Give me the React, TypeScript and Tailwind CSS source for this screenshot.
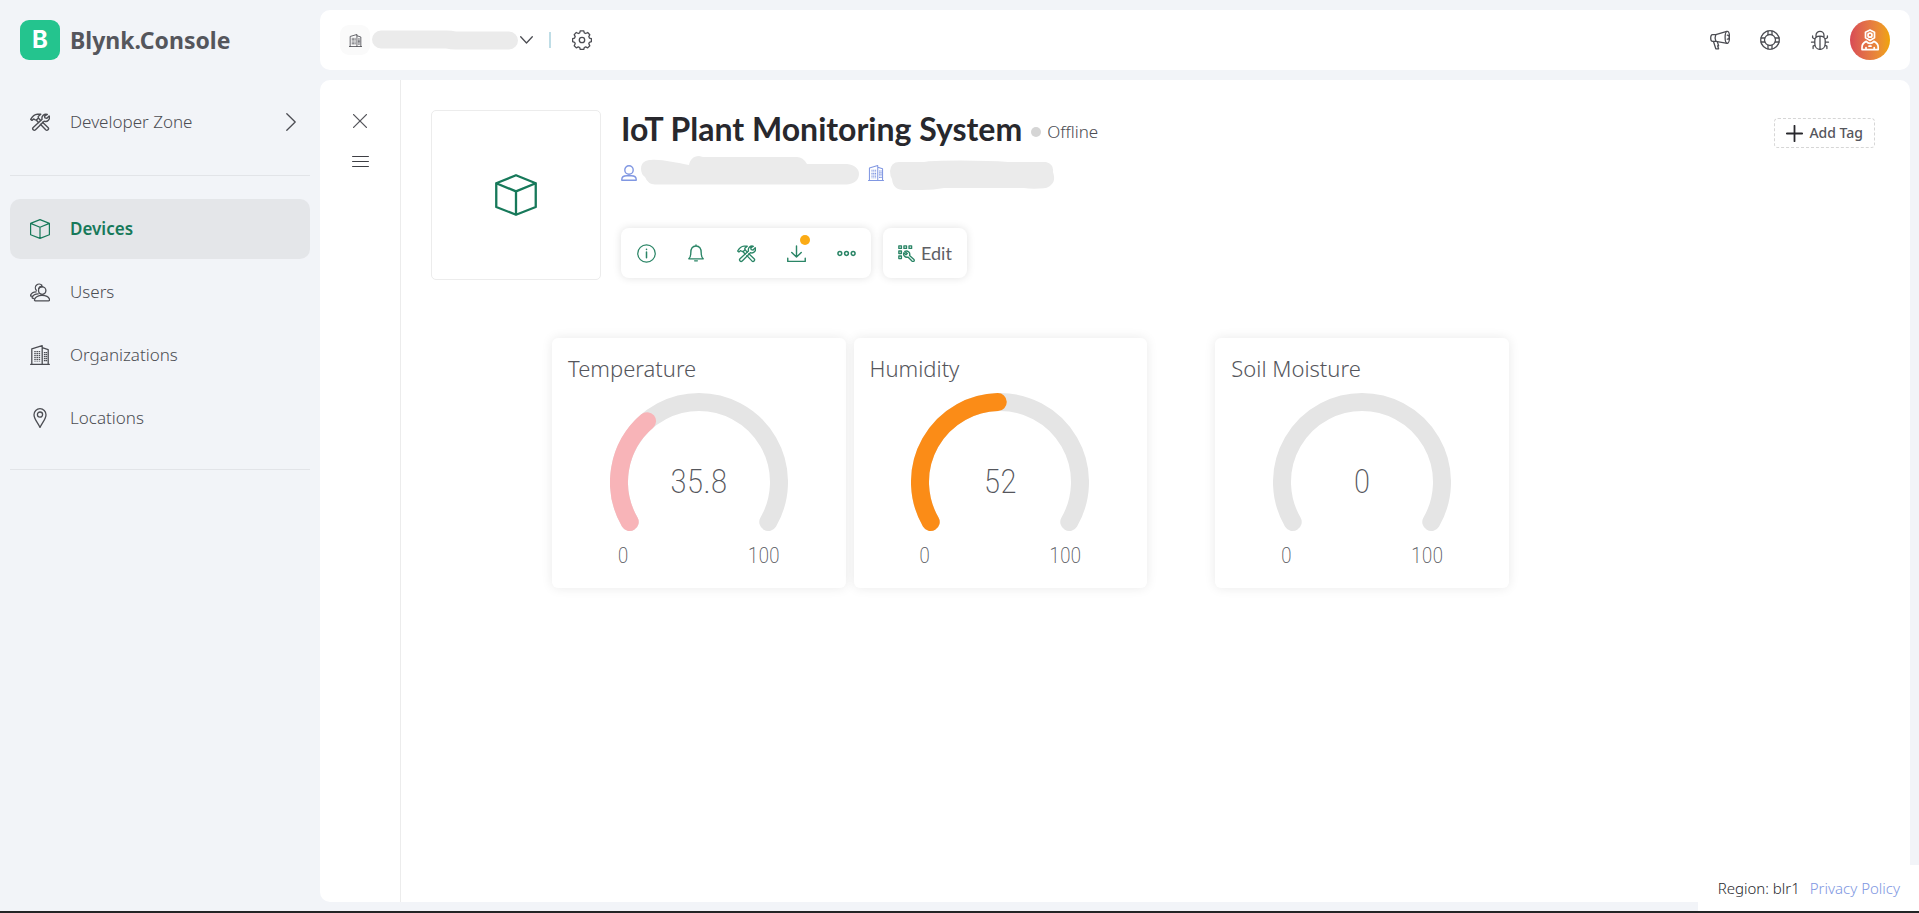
import type { ReactNode } from "react";

type IconProps = { className?: string; children: ReactNode; box?: string; stroke?: number };

function Icon({ className = "size-5", children, box = "0 0 20 20", stroke = 1.3 }: IconProps) {
  return (
    <svg
      className={"shrink-0 " + className}
      viewBox={box}
      fill="none"
      stroke="currentColor"
      strokeWidth={stroke}
      strokeLinecap="round"
      strokeLinejoin="round"
      aria-hidden="true"
    >
      {children}
    </svg>
  );
}

function CubeIcon({ className, stroke }: { className?: string; stroke?: number }) {
  return (
    <Icon className={className} stroke={stroke}>
      <path d="M10 .6 19.4 4.4V15.7L10 19.4.6 15.7V4.4ZM.6 4.4 10 8.3 19.4 4.4M10 8.3V19.4" />
    </Icon>
  );
}

function ToolsIcon({ className }: { className?: string }) {
  return (
    <Icon className={className} stroke={1.4}>
      <path d="M.7 7.4C2.2 4.600 4.600 2.300 7.400 2.200L10.800 2.300 8.200 4.500 8.400 6.100 6.400 8.100 4.800 7.600 3.600 7 2 8.400Z" />
      <path d="M8.600 6.200 10.700 8.400M6.400 8.200 8.500 10.500M12.500 10.300 18 15.500A1.600 1.600 0 0 1 15.700 17.800L10.400 12.200" />
      <path d="M17.300 2.400A4 4 0 0 0 12.100 7.300L3.200 15.500A1.600 1.600 0 0 0 5.500 17.800L14.100 9.200A4 4 0 0 0 19.200 3.900L16.900 6.300 14.900 5.900 14.500 4.100Z" />
    </Icon>
  );
}

function UsersIcon() {
  return (
    <Icon>
      <circle cx="12.2" cy="8.6" r="3.7" />
      <path d="M5.3 18.8a1 1 0 0 1-.8-1.3c1-2.5 3.6-4.1 7.500-4.100s6.800 1.500 7.500 4c.2.8-.1 1.400-.9 1.400Z" />
      <path d="M8.600 6.600A3.300 3.300 0 0 1 12.500 4.700M6.300 8.200A3.700 3.700 0 1 1 11.900 3.300" />
      <path d="M4 16.400H3C2.200 16.400 2 15.800 2.200 15.200 3 13.200 5.100 11.900 8.300 11.800M2 14.200H1.400C.6 14.200.4 13.600.6 13 1.400 11 3.400 10 6.200 9.800" />
    </Icon>
  );
}

function BuildingIcon({ className }: { className?: string }) {
  return (
    <Icon className={className}>
      <path d="M.6 19.300H19.400M1.800 19.300V3.800L12.200.7V19.300M12.200 2.700 18.200 4.600V19.300" />
      <path
        d="M5 6V16.500M7.200 6V16.500M9.400 6V16.500M14.600 7V16.500M16.400 7V16.500"
        strokeWidth="1.5"
        strokeDasharray="1.2 .8"
        strokeLinecap="butt"
      />
    </Icon>
  );
}

function PinIcon() {
  return (
    <Icon>
      <path d="M10 19.400C8 15 4 11 4 6.700A6 6 0 0 1 16 6.700C16 11 12 15 10 19.400Z" />
      <circle cx="10" cy="6.600" r="2.600" />
    </Icon>
  );
}

function GearIcon() {
  return (
    <Icon>
      <path d="M8.300.8h3.400l.6 2.100 1.400.6 2-1 2.100 2.200-1 1.900.6 1.500 2 .6v3l-2 .6-.6 1.500 1 2-2.100 2.100-2-1-1.400.6-.6 2H8.300l-.6-2-1.400-.6-2 1-2.100-2.200 1-1.900-.6-1.500-2-.6v-3l2-.6.6-1.500-1-2 2.100-2.100 2 1 1.400-.6Z" />
      <circle cx="10" cy="10" r="2.700" />
    </Icon>
  );
}

function MegaphoneIcon() {
  return (
    <Icon>
      <path d="M16.800 1.300 5.800 4.600H2.500C1.300 4.600.7 6.200.7 8S1.400 11.400 2.500 11.400H5.900L17.200 13.300" />
      <ellipse cx="17.300" cy="7.300" rx="2.200" ry="6" />
      <path d="M5.800 4.600C5 6.500 5 9.500 5.900 11.400M17.300 5.200A2 2 0 0 1 17.300 9.200M3.500 11.500 5.800 18.800H8.600L7.600 15.800H8.600L7.300 11.600" />
    </Icon>
  );
}

function LifebuoyIcon() {
  return (
    <Icon>
      <circle cx="10" cy="10" r="9.300" />
      <circle cx="10" cy="10" r="5.500" />
      <path d="M8 .9V4.800M12 .9V4.800M8 15.200V19.100M12 15.200V19.100M.9 8H4.800M.9 12H4.800M15.200 8H19.100M15.200 12H19.100" />
    </Icon>
  );
}

function BugIcon() {
  return (
    <Icon>
      <path d="M6 6.600V5.400A4 4 0 0 1 14 5.400V6.600M4.800 10.500C4.800 7.500 7 6.200 10 6.200S15.200 7.500 15.200 10.500V13.500C15.200 16.800 13.200 19.400 10 19.400S4.800 16.800 4.800 13.500ZM10 6.200V19.400M4.800 9 2.600 7.800V6M15.200 9 17.400 7.800V6M4.800 12.200H1.500M15.200 12.200H18.500M5.200 15.200 3.100 16.200V18.600M14.800 15.200 16.900 16.200V18.600" />
    </Icon>
  );
}

const NAV = [
  { label: "Users", icon: <UsersIcon /> },
  { label: "Organizations", icon: <BuildingIcon /> },
  { label: "Locations", icon: <PinIcon /> },
];

function Sidebar() {
  return (
    <aside className="w-80 shrink-0 px-2.5 pt-5 text-[#4c4d53]">
      <a href="#home" className="flex h-10 items-center gap-2.5 pl-2.5">
        <span className="flex size-10 items-center justify-center rounded-[9px] bg-[#24c48e] font-['Inter'] text-2xl font-bold text-white">
          B
        </span>
        <span className="text-[23px] font-bold text-[#55565c]">Blynk.Console</span>
      </a>
      <nav className="text-[17px] font-[350]">
        <a href="#developer" className="mt-8 flex h-15 items-center gap-5 pr-[14px] pl-5">
          <ToolsIcon />
          <span className="flex-1">Developer Zone</span>
          <Icon className="h-[18px] w-[10px]" box="0 0 10 18">
            <path d="M.8.8 9.200 9 .8 17.200" />
          </Icon>
        </a>
        <div className="mt-[23px] border-t border-[#e2e4e8]" />
        <ul className="mt-[23px] flex flex-col gap-[3px]">
          <li>
            <a
              href="#devices"
              aria-current="page"
              className="flex h-15 items-center gap-5 rounded-[10px] bg-[#e4e6e9] pl-5 font-semibold text-[#17795a]"
            >
              <CubeIcon stroke={1.2} />
              Devices
            </a>
          </li>
          {NAV.map((n) => (
            <li key={n.label}>
              <a href={"#" + n.label.toLowerCase()} className="flex h-15 items-center gap-5 pl-5">
                {n.icon}
                {n.label}
              </a>
            </li>
          ))}
        </ul>
        <div className="mt-[21px] border-t border-[#e2e4e8]" />
      </nav>
    </aside>
  );
}

function TopBar() {
  return (
    <header className="flex h-15 shrink-0 items-center rounded-[10px] bg-white px-5 text-[#4c4d53]">
      <button type="button" aria-label="Switch organization" className="flex items-center">
        <span className="flex size-[30px] items-center justify-center rounded-[9px] bg-[#fafafa]">
          <BuildingIcon className="size-[13px]" />
        </span>
        <svg className="ml-0.5 h-5 w-[146px]" viewBox="0 0 146 20" fill="#ebebeb" aria-hidden="true">
          <path d="M9 .5H74Q80 .5 84 1.500H137A9 9 0 0 1 137 19.500H84Q78 19.500 74 18.500H9A9 9 0 0 1 9 .5Z" />
        </svg>
        <Icon className="ml-0.5 h-2 w-[13px]" box="0 0 13 8">
          <path d="M.7.8 6.500 7 12.300.8" />
        </Icon>
      </button>
      <span className="ml-4 h-4 w-0.5 bg-[#bfdde6]" />
      <button type="button" aria-label="Settings" className="ml-[21px]">
        <GearIcon />
      </button>
      <div className="ml-auto flex items-center gap-5">
        <div className="flex items-center gap-[30px]">
          <button type="button" aria-label="Announcements">
            <MegaphoneIcon />
          </button>
          <button type="button" aria-label="Help">
            <LifebuoyIcon />
          </button>
          <button type="button" aria-label="Report a bug">
            <BugIcon />
          </button>
        </div>
        <button
          type="button"
          aria-label="Account"
          className="flex size-10 items-center justify-center rounded-full bg-linear-to-r from-[#d84a55] to-[#f0a400] text-white"
        >
          <Icon className="size-[22px]" box="0 0 22 22" stroke={1.7}>
            <path d="M11 1 15.500 3.200V8.800L11 11.500 6.500 8.800V3.200Z" />
            <circle cx="11" cy="6.200" r="2" />
            <path d="M7.200 12.400C4.500 13.600 3 15.600 3 18.400V20.600H19.200V18.400C19.200 15.600 17.600 13.600 14.900 12.400M7.200 12.400C9.400 15 12.700 15 14.900 12.400M7 20.500V18.500M15.200 20.500V18.500M10 17.200H12" />
          </Icon>
        </button>
      </div>
    </header>
  );
}

function Toolbar() {
  const button = "flex size-[50px] items-center justify-center";
  return (
    <div className="flex gap-3 text-[#2a8566]">
      <div className="flex rounded-lg bg-white shadow-[0_0_8px_rgba(0,0,0,0.12)]">
        <button type="button" aria-label="Device info" className={button}>
          <Icon className="size-[19px]">
            <circle cx="10" cy="10" r="9.200" />
            <path d="M10 8.500V14.500M10 5.500V5.900" strokeWidth="1.6" />
          </Icon>
        </button>
        <button type="button" aria-label="Notifications" className={button}>
          <Icon className="size-[18px]" stroke={1.5}>
            <path d="M10 1V2.200M2 16.500C3.700 15 4.200 13 4.200 10 4.200 5 6.600 2.200 10 2.200S15.800 5 15.800 10C15.800 13 16.300 15 18 16.500ZM8.500 18.700H11.500" />
          </Icon>
        </button>
        <button type="button" aria-label="Developer tools" className={button}>
          <ToolsIcon className="size-[19px]" />
        </button>
        <button type="button" aria-label="Firmware updates" className={button + " relative"}>
          <Icon className="size-[19px]" stroke={1.5}>
            <path d="M10 2V13.500M5 9 10 13.800 15 9M.8 15V18.300H19.200V15" />
          </Icon>
          <span className="absolute top-[7px] right-[11px] size-2.5 rounded-full bg-[#fbab15]" />
        </button>
        <button type="button" aria-label="More actions" className={button}>
          <Icon className="size-[19px]" stroke={1.6}>
            <circle cx="3" cy="10" r="2" />
            <circle cx="10" cy="10" r="2" />
            <circle cx="17" cy="10" r="2" />
          </Icon>
        </button>
      </div>
      <button
        type="button"
        className="flex items-center gap-1.5 rounded-lg bg-white px-[15px] shadow-[0_0_8px_rgba(0,0,0,0.12)]"
      >
        <Icon className="size-[17px]" stroke={1.6}>
          <path d="M1 1h3v3H1ZM7 1h3v3H7ZM13 1h3v3H13ZM1 7h3v3H1ZM1 13h3v3H1Z" />
          <path d="M8 7.600A3.900 3.900 0 0 1 13.600 12.300L18.800 17.100A1.500 1.500 0 0 1 16.700 19.200L11.700 14.200A3.800 3.800 0 0 1 6.900 9.200L9.400 11.400 10.900 9.900Z" />
        </Icon>
        <span className="font-['Lato',sans-serif] text-lg leading-6 text-[#5f6065]">Edit</span>
      </button>
    </div>
  );
}

function DeviceHeader() {
  return (
    <div className="flex items-start gap-5">
      <div className="flex size-[170px] shrink-0 items-center justify-center rounded-[5px] border border-[#ececec] text-[#17795a]">
        <CubeIcon className="size-[42px]" stroke={1.1} />
      </div>
      <div className="flex h-[170px] flex-1 flex-col pb-0.5">
        <div className="flex h-[38px] items-center">
          <h1 className="font-['Lato',sans-serif] text-[32px] leading-[38px] font-bold text-[#28282d]">
            IoT Plant Monitoring System
          </h1>
          <span className="mt-1.5 ml-[9px] flex items-center gap-1.5 text-[17px] leading-6 font-[350] text-[#4c4d53]">
            <span className="size-2.5 rounded-full bg-[#d5d5d5]" />
            Offline
          </span>
        </div>
        <div className="mt-2 flex h-[34px] items-center text-[#8097e2]">
          <Icon className="size-4" box="0 0 16 16" stroke={1.400}>
            <circle cx="8" cy="5" r="4.200" />
            <path d="M.8 15.300V14.300C.8 12.300 2.800 10.700 5.800 10.700H10.200C13.200 10.700 15.200 12.300 15.200 14.300V15.300Z" />
          </Icon>
          <svg className="mr-2 ml-1 h-[30px] w-[219px] self-start" viewBox="0 0 219 30" fill="#ebebeb" aria-hidden="true">
            <path d="M0 13C0 6 5 4 10 4 20 3 36 7 48 9 49 4 52 0 58 0L62 1H156Q162 1 166 8H206C214 9 218 13 218 18S214 28 206 28.500H14Q7 28.500 4 21Q0 18 0 13Z" />
          </svg>
          <BuildingIcon className="size-4" />
          <svg className="ml-1.5 h-[30px] w-[165px] self-end" viewBox="0 0 165 30" fill="#ebebeb" aria-hidden="true">
            <path d="M0 11Q1 2 9 2H34Q40 .5 70 .5T118 2H156Q164 4 163 12Q166 21 161 25Q158 28.500 150 28.500 140 29 134 28H54Q44 30 32 30H14Q3 30 2 19Q0 16 0 11Z" />
          </svg>
        </div>
        <div className="mt-auto">
          <Toolbar />
        </div>
      </div>
      <button
        type="button"
        className="mt-2 flex h-[30px] items-center gap-1.5 rounded border border-dashed border-[#d6d6d6] px-[11px] text-sm font-medium text-[#55565c]"
      >
        <Icon className="size-[17px] text-[#28282d]" box="0 0 17 17" stroke={1.8}>
          <path d="M8.500.8V16.200M.8 8.500H16.200" />
        </Icon>
        Add Tag
      </button>
    </div>
  );
}

const RADIUS = 80;
const SWEEP = 240;
// Angle taken up by the round cap at the end of the filled arc.
const CAP = 6.4;

function arc(from: number, to: number) {
  const at = (deg: number) => {
    const r = (deg * Math.PI) / 180;
    return `${89 + RADIUS * Math.sin(r)} ${89 - RADIUS * Math.cos(r)}`;
  };
  return `M${at(from)}A${RADIUS} ${RADIUS} 0 ${to - from > 180 ? 1 : 0} 1 ${at(to)}`;
}

type GaugeProps = { title: string; value: number; color: string; className: string };

function Gauge({ title, value, color, className }: GaugeProps) {
  return (
    <section
      className={
        "flex h-[250px] flex-col items-center rounded-md bg-white px-4 pt-[15px] text-[#55565c] shadow-[0_0_12px_rgba(0,0,0,0.09)] " +
        className
      }
    >
      <h2 className="self-start text-[22px] leading-[30px] font-[350]">{title}</h2>
      <div className="mt-2.5 grid w-[178px] font-['Roboto_Condensed','Liberation_Sans_Narrow',Roboto,sans-serif] font-extralight">
        <svg
          className="col-start-1 row-start-1 h-[140px] w-[178px]"
          viewBox="0 0 178 140"
          fill="none"
          strokeWidth="18"
          strokeLinecap="round"
          role="img"
          aria-label={title}
        >
          <path d={arc(-120, 120)} stroke="#e5e5e5" />
          {value > 0 && <path d={arc(-120, -120 + (SWEEP * value) / 100 - CAP)} stroke={color} />}
        </svg>
        <output className="col-start-1 row-start-1 mt-[68px] text-center text-[34px] leading-10">{value}</output>
        <div className="mt-[11px] flex justify-between px-2 text-[22px] leading-6">
          <span>0</span>
          <span>100</span>
        </div>
      </div>
    </section>
  );
}

function Footer() {
  return (
    <footer className="absolute right-0 bottom-0 flex h-[46px] items-center gap-2.5 rounded-tl-md bg-white pr-[19px] pl-5 text-[15px] font-light">
      <span className="text-[#28282d]">Region: blr1</span>
      <a href="#privacy" className="text-[#8097e2]">
        Privacy Policy
      </a>
    </footer>
  );
}

export default function App() {
  return (
    <div className="relative flex min-h-screen border-b-2 border-[#232526] bg-[#f2f4f8] font-['Noto_Sans',sans-serif]">
      <Sidebar />
      <div className="flex min-w-0 flex-1 flex-col gap-2.5 pt-2.5 pr-[9px] pb-[9px]">
        <TopBar />
        <div className="flex flex-1 rounded-[10px] bg-white">
          <div className="flex w-[81px] shrink-0 flex-col items-center gap-5 border-r border-[#ececec] pt-[31px] text-[#55565c]">
            <button type="button" aria-label="Close" className="flex size-5 items-center justify-center">
              <Icon className="size-[14px]" box="0 0 14 14">
                <path d="M.6.6 13.400 13.400M13.400.6.6 13.400" />
              </Icon>
            </button>
            <button type="button" aria-label="Menu" className="flex size-5 items-center justify-center text-[#3e3f44]">
              <Icon className="h-[13px] w-[17px]" box="0 0 17 13" stroke={1.2}>
                <path d="M.6 1.500H16.400M.6 6.500H16.400M.6 11.500H16.400" />
              </Icon>
            </button>
          </div>
          <main className="min-w-0 flex-1 pt-[30px] pr-[35px] pl-[30px]">
            <DeviceHeader />
            <div className="mt-[58px] pr-1">
              <div className="mx-auto grid max-w-[1198px] grid-cols-20 gap-2">
                <Gauge title="Temperature" value={35.8} color="#f8b4b8" className="col-span-5" />
                <Gauge title="Humidity" value={52} color="#fb8c17" className="col-span-5" />
                <Gauge title="Soil Moisture" value={0} color="#8097e2" className="col-span-5 col-start-12" />
              </div>
            </div>
          </main>
        </div>
      </div>
      <Footer />
    </div>
  );
}
